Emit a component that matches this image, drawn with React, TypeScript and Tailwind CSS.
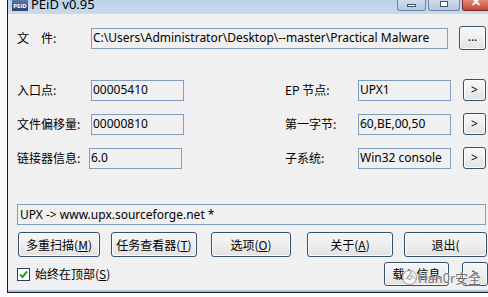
import React from "react";

const latin = { fontFamily: '"Noto Sans", "Noto Sans CJK SC", sans-serif' };
const cjk = { fontFamily: '"Noto Sans CJK SC", "Noto Sans", sans-serif' };

function Box({ w, children, ml = 0 }: { w: number; children?: React.ReactNode; ml?: number }) {
  return (
    <div
      className="h-[21px] border border-[#7f9fbf] bg-[#f0f0f0] flex items-center pl-[1px] text-[12px] text-black whitespace-nowrap overflow-hidden leading-none"
      style={{ width: w, marginLeft: ml, ...latin }}
    >
      {children}
    </div>
  );
}

function Btn({
  w,
  h = 25,
  ml = 0,
  children,
}: {
  w: number;
  h?: number;
  ml?: number;
  children?: React.ReactNode;
}) {
  return (
    <div
      className="shrink-0 rounded-[3px] border border-[#34506e] bg-gradient-to-b from-[#f7f7f7] via-[#eeeeee] to-[#e2e2e2] shadow-[inset_0_0_0_1px_#fcfcfc] flex items-center justify-center text-[12px] text-black leading-none"
      style={{ width: w, height: h, marginLeft: ml, ...cjk }}
    >
      {children}
    </div>
  );
}

function Label({ w, children }: { w: number; children: React.ReactNode }) {
  return (
    <div className="shrink-0 text-[12px] text-black leading-none whitespace-nowrap" style={{ width: w, ...cjk }}>
      {children}
    </div>
  );
}

export default function App() {
  return (
    <div className="w-[488px] h-[297px] bg-white flex overflow-hidden relative">
      <div className="w-[7px] shrink-0 bg-[#f9f9f9]" />
      <div className="flex-1 h-[293px] border-l border-b border-[#1c1c1c] flex flex-col">
        {/* title bar */}
        <div className="h-[14px] shrink-0 bg-gradient-to-b from-[#b9d1ea] to-[#c8daee] flex items-start overflow-hidden">
          <div
            className="ml-[4px] w-[16px] h-[11px] bg-gradient-to-b from-[#5a7aa8] to-[#2a4470] text-white text-[6px] font-bold flex items-center justify-center leading-none"
            style={latin}
          >
            PEiD
          </div>
          <div className="ml-[3px] mt-[-4px] text-[13px] text-black leading-[16px]" style={latin}>
            PEiD v0.95
          </div>
          <div className="ml-auto flex items-start">
            <div className="w-[29px] h-[11px] rounded-b-[3px] border border-t-0 border-[#6d88a8] bg-gradient-to-b from-[#cfdcec] to-[#b4c8e0] flex items-center justify-center">
              <div className="w-[9px] h-[3px] bg-white border border-[#44546a] mt-[1px]" />
            </div>
            <div className="ml-[2px] w-[32px] h-[11px] rounded-b-[3px] border border-t-0 border-[#6d88a8] bg-gradient-to-b from-[#cfdcec] to-[#b4c8e0] flex items-center justify-center">
              <div className="w-[8px] h-[6px] bg-white border border-[#44546a] -mt-[2px]" />
            </div>
            <div className="ml-[2px] w-[26px] h-[11px] rounded-bl-[3px] border border-t-0 border-r-0 border-[#7a2a22] bg-gradient-to-b from-[#e08a78] to-[#c4452f] flex items-start justify-center overflow-hidden">
              <span className="text-white text-[12px] font-bold leading-none -mt-[4px]" style={latin}>
                ✕
              </span>
            </div>
          </div>
        </div>

        {/* client */}
        <div className="flex-1 bg-[#f0f0f0] border-b-2 border-[#a9c6e6] flex flex-col pl-[9px]">
          {/* row 1 */}
          <div className="mt-[12px] h-[24px] flex items-center">
            <Label w={74}>
              文<span className="inline-block w-[12px]" />件:
            </Label>
            <Box w={357}>C:\Users\Administrator\Desktop\--master\Practical Malware</Box>
            <Btn w={27} h={24} ml={11}>
              <span className="text-[12px] -mt-[2px]" style={latin}>...</span>
            </Btn>
          </div>

          {/* row 2 */}
          <div className="mt-[29px] h-[22px] flex items-center">
            <Label w={74}>入口点:</Label>
            <Box w={93}>00005410</Box>
            <div className="w-[101px] shrink-0" />
            <Label w={73}>EP 节点:</Label>
            <Box w={93}>UPX1</Box>
            <Btn w={23} h={22} ml={12}>
              <span style={latin}>&gt;</span>
            </Btn>
          </div>

          {/* row 3 */}
          <div className="mt-[12px] h-[22px] flex items-center">
            <Label w={74}>文件偏移量:</Label>
            <Box w={93}>00000810</Box>
            <div className="w-[101px] shrink-0" />
            <Label w={73}>第一字节:</Label>
            <Box w={93}>60,BE,00,50</Box>
            <Btn w={23} h={22} ml={12}>
              <span style={latin}>&gt;</span>
            </Btn>
          </div>

          {/* row 4 */}
          <div className="mt-[12px] h-[22px] flex items-center">
            <Label w={72}>链接器信息:</Label>
            <Box w={93}>6.0</Box>
            <div className="w-[103px] shrink-0" />
            <Label w={73}>子系统:</Label>
            <Box w={93}>Win32 console</Box>
            <Btn w={23} h={22} ml={12}>
              <span style={latin}>&gt;</span>
            </Btn>
          </div>

          {/* status */}
          <div className="mt-[35px] flex">
            <Box w={469}>
              <span className="pl-[1px]">UPX -&gt; www.upx.sourceforge.net *</span>
            </Box>
          </div>

          {/* buttons */}
          <div className="mt-[7px] flex pl-[1px]">
            <Btn w={82}>
              多重扫描(<u>M</u>)
            </Btn>
            <Btn w={86} ml={11}>
              任务查看器(<u>T</u>)
            </Btn>
            <Btn w={80} ml={14}>
              选项(<u>O</u>)
            </Btn>
            <Btn w={86} ml={16}>
              关于(<u>A</u>)
            </Btn>
            <Btn w={83} ml={11}>
              退出(
            </Btn>
          </div>

          {/* bottom row */}
          <div className="mt-[5px] h-[24px] flex items-center">
            <div className="w-[13px] h-[13px] border border-[#1f3f66] bg-white flex items-center justify-center shrink-0">
              <svg width="9" height="9" viewBox="0 0 9 9">
                <path d="M1 4.5 L3.5 7 L8 1.5" stroke="#21a121" strokeWidth="2" fill="none" />
              </svg>
            </div>
            <div className="ml-[5px] text-[12px] text-black leading-none" style={cjk}>
              始终在顶部(<u>S</u>)
            </div>
            <div className="ml-auto flex">
              <Btn w={65} h={24}>
                载入信息
              </Btn>
              <Btn w={26} h={24} ml={13}>
                <span style={latin}>&gt;</span>
              </Btn>
            </div>
          </div>
        </div>
      </div>

      {/* watermark */}
      <div className="absolute left-[402px] top-[270px] flex items-center pointer-events-none">
        <div className="w-[15px] h-[15px] rounded-full border-[1.5px] border-[#9a9a9a] bg-white/70 flex items-center justify-center">
          <div className="w-[5px] h-[5px] rounded-full border border-[#9a9a9a]" />
        </div>
        <span
          className="ml-[1px] text-[13px] text-[#6e6e6e] leading-none"
          style={{ ...cjk, textShadow: "0 0 2px #fff, 0 0 1px #fff" }}
        >
          Han0r安全
        </span>
      </div>
    </div>
  );
}
